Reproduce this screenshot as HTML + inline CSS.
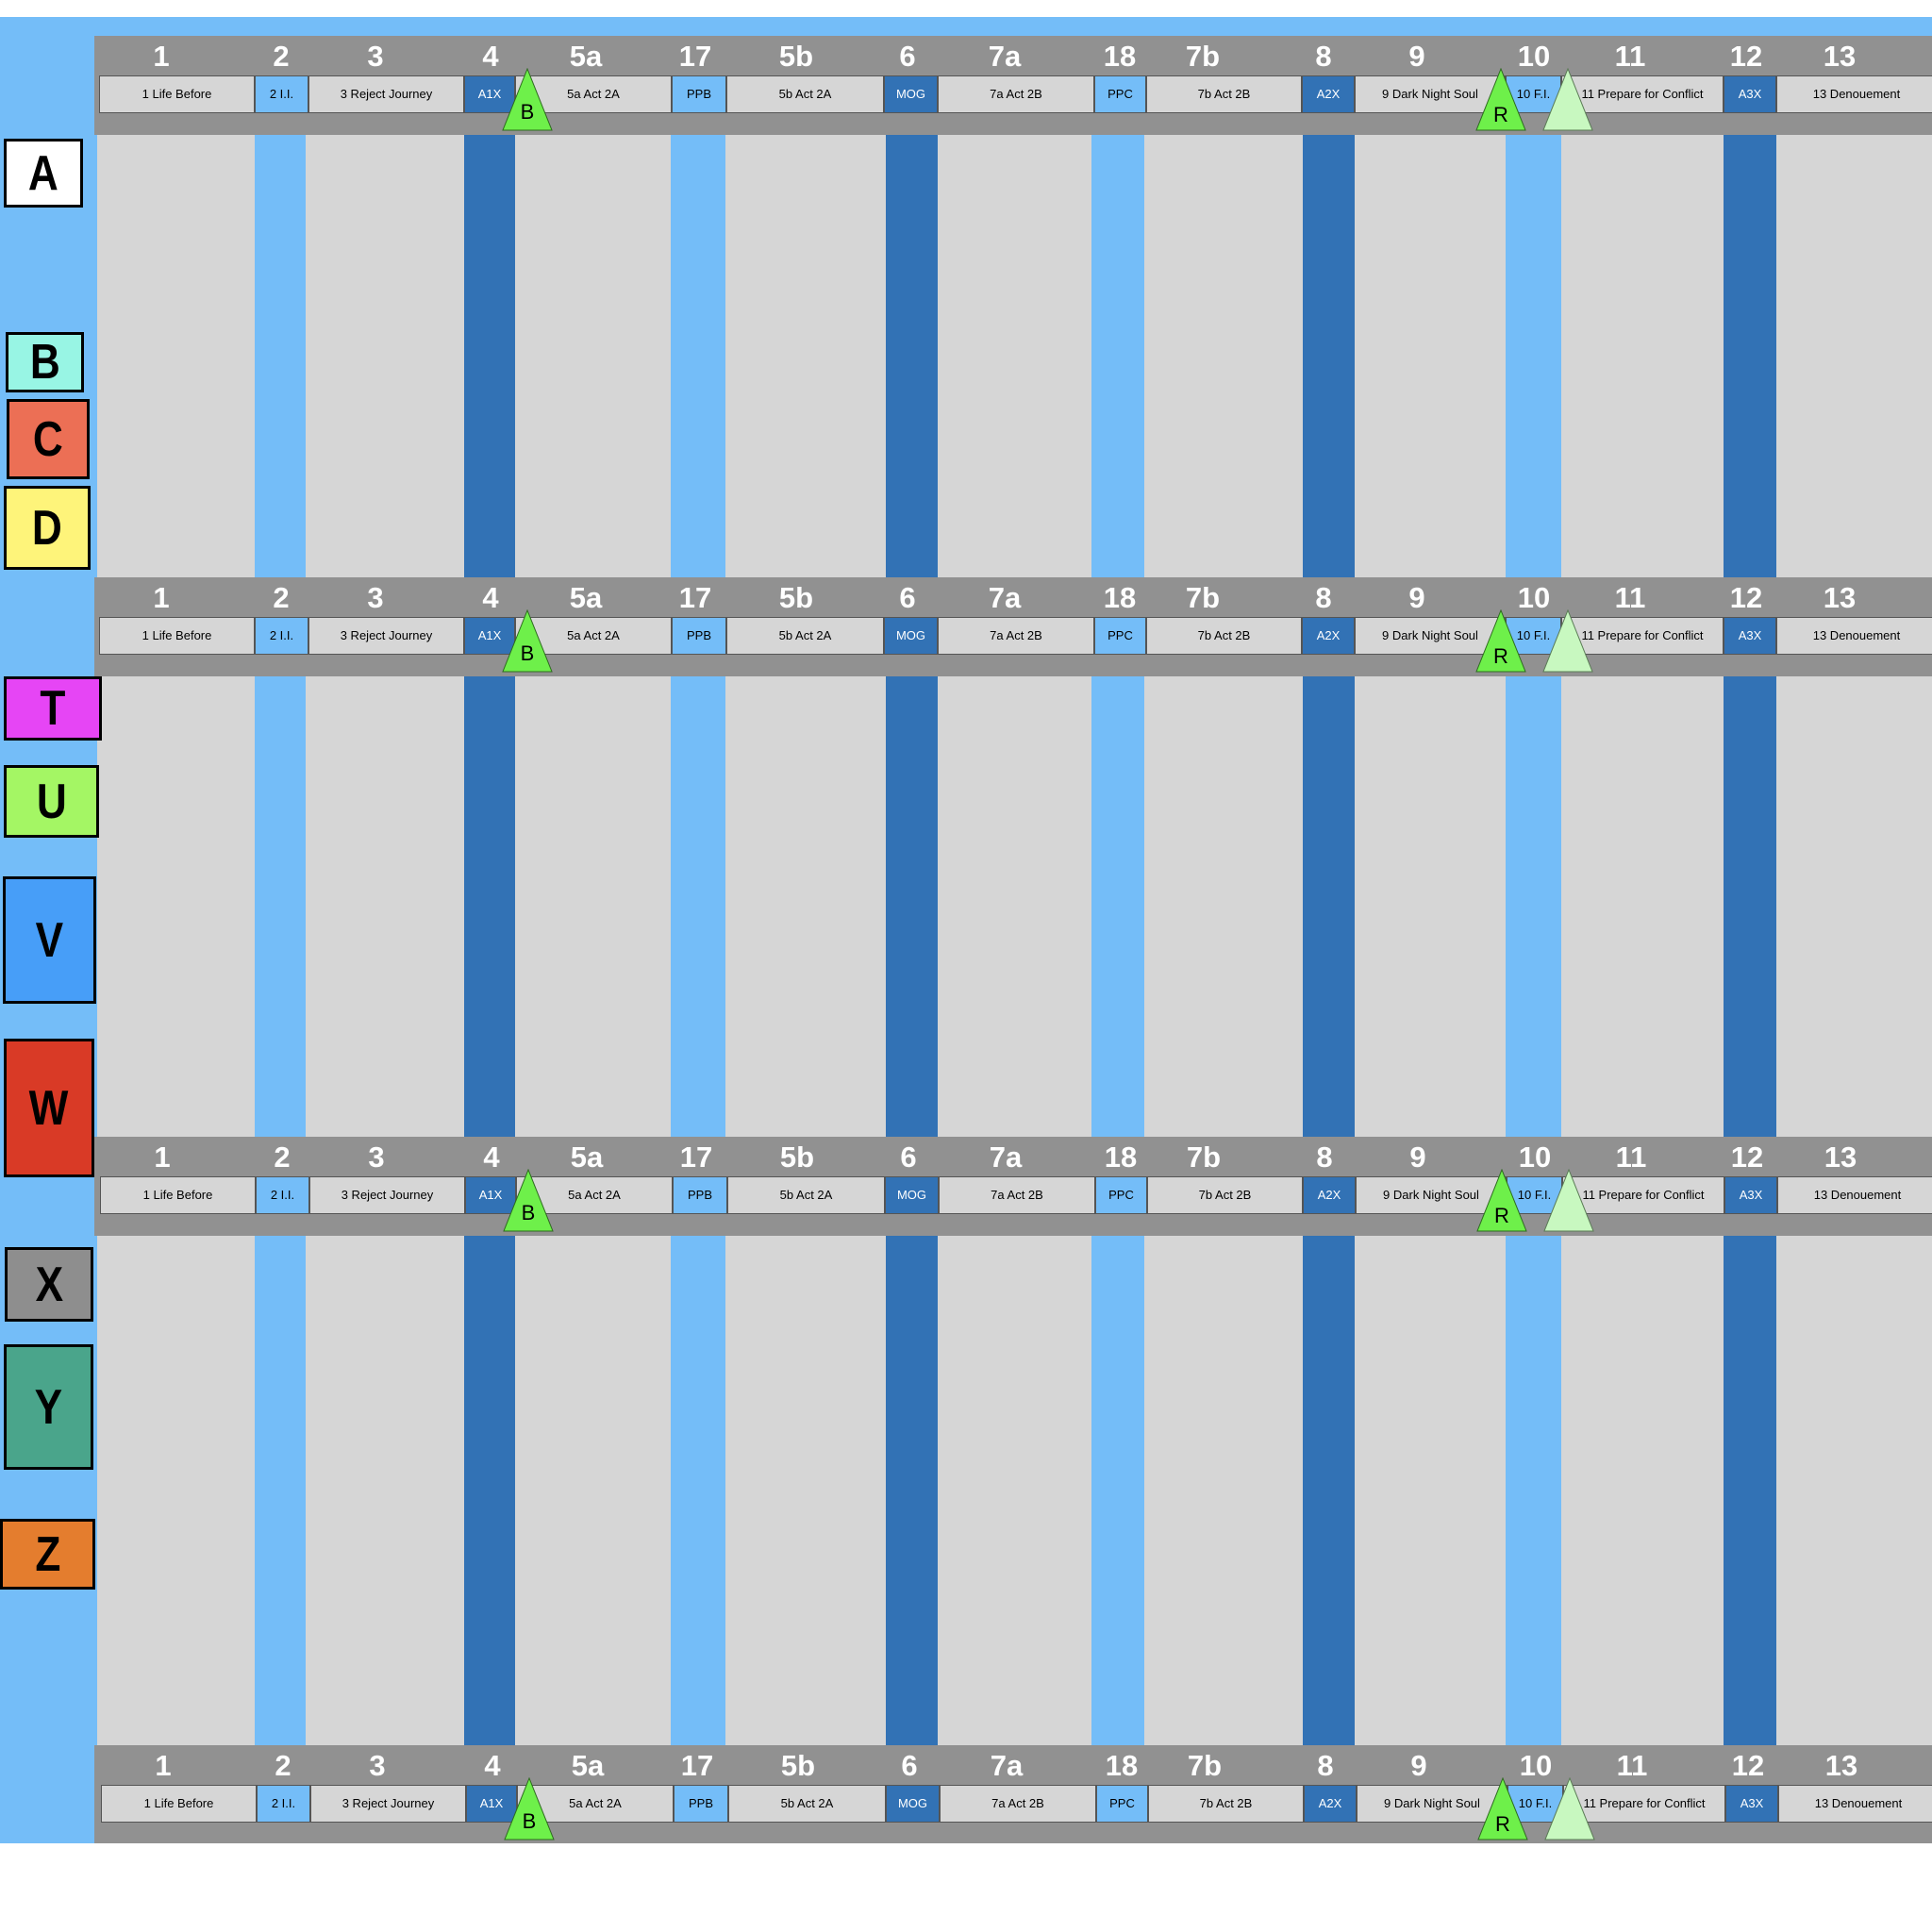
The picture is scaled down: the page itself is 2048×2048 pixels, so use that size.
<!DOCTYPE html>
<html><head><meta charset="utf-8"><style>
*{margin:0;padding:0;box-sizing:border-box}
body{width:2048px;height:2048px;background:#fff;position:relative;overflow:hidden;font-family:"Liberation Sans",sans-serif}
.abs{position:absolute}
#bg{left:0;top:18px;width:2048px;height:1936px;background:#74bdf8}
.c{position:absolute;top:143px;height:1710px}
.l{background:#d6d6d6}.b{background:#74bdf8}.d{background:#3272b5}
.h{position:absolute;left:100px;width:1948px;height:105px;background:#919191}
.n{position:absolute;top:2px;width:80px;margin-left:-40px;text-align:center;color:#fff;font-weight:bold;font-size:31px;line-height:40px}
.lb{position:absolute;top:42px;height:40px;border:1px solid #555;font-size:13px;line-height:38px;text-align:center;color:#000;white-space:nowrap;overflow:hidden}
.lb.d{color:#fff}
.t{position:absolute;top:34px;width:54px;height:67px}
.box{position:absolute;border:3px solid #000;display:flex;align-items:center;justify-content:center;font-weight:bold;font-size:52px;color:#000}
.box span{display:inline-block;transform:scaleX(.85)}
</style></head><body>
<div id="bg" class="abs"></div>
<div class="c l" style="left:103px;width:167px"></div>
<div class="c b" style="left:270px;width:54px"></div>
<div class="c l" style="left:324px;width:168px"></div>
<div class="c d" style="left:492px;width:54px"></div>
<div class="c l" style="left:546px;width:165px"></div>
<div class="c b" style="left:711px;width:58px"></div>
<div class="c l" style="left:769px;width:170px"></div>
<div class="c d" style="left:939px;width:55px"></div>
<div class="c l" style="left:994px;width:163px"></div>
<div class="c b" style="left:1157px;width:56px"></div>
<div class="c l" style="left:1213px;width:168px"></div>
<div class="c d" style="left:1381px;width:55px"></div>
<div class="c l" style="left:1436px;width:160px"></div>
<div class="c b" style="left:1596px;width:59px"></div>
<div class="c l" style="left:1655px;width:172px"></div>
<div class="c d" style="left:1827px;width:56px"></div>
<div class="c l" style="left:1883px;width:165px"></div>

<!-- HEADERS -->
<div class="h" style="top:38px">
<div class="n" style="left:71px">1</div><div class="n" style="left:198px">2</div><div class="n" style="left:298px">3</div><div class="n" style="left:420px">4</div><div class="n" style="left:521px">5a</div><div class="n" style="left:637px">17</div><div class="n" style="left:744px">5b</div><div class="n" style="left:862px">6</div><div class="n" style="left:965px">7a</div><div class="n" style="left:1087px">18</div><div class="n" style="left:1175px">7b</div><div class="n" style="left:1303px">8</div><div class="n" style="left:1402px">9</div><div class="n" style="left:1526px">10</div><div class="n" style="left:1628px">11</div><div class="n" style="left:1751px">12</div><div class="n" style="left:1850px">13</div>
<div class="lb l" style="left:5px;width:165px">1 Life Before</div><div class="lb b" style="left:170px;width:57px">2 I.I.</div><div class="lb l" style="left:227px;width:165px">3 Reject Journey</div><div class="lb d" style="left:392px;width:54px">A1X</div><div class="lb l" style="left:446px;width:166px">5a Act 2A</div><div class="lb b" style="left:612px;width:58px">PPB</div><div class="lb l" style="left:670px;width:167px">5b Act 2A</div><div class="lb d" style="left:837px;width:57px">MOG</div><div class="lb l" style="left:894px;width:166px">7a Act 2B</div><div class="lb b" style="left:1060px;width:55px">PPC</div><div class="lb l" style="left:1115px;width:165px">7b Act 2B</div><div class="lb d" style="left:1280px;width:56px">A2X</div><div class="lb l" style="left:1336px;width:160px">9 Dark Night Soul</div><div class="lb b" style="left:1496px;width:59px">10 F.I.</div><div class="lb l" style="left:1555px;width:172px">11 Prepare for Conflict</div><div class="lb d" style="left:1727px;width:56px">A3X</div><div class="lb l" style="left:1783px;width:170px">13 Denouement</div>
<svg class="t" style="left:432px" viewBox="0 0 54 67"><polygon points="27,1 1,66 53,66" fill="#6ef04a" stroke="#2d6a1e" stroke-width="1"/><text x="27" y="54" font-size="22" text-anchor="middle" font-family="Liberation Sans">B</text></svg>
<svg class="t" style="left:1464px" viewBox="0 0 54 67"><polygon points="27,1 1,66 53,66" fill="#6ef04a" stroke="#2d6a1e" stroke-width="1"/><text x="27" y="57" font-size="22" text-anchor="middle" font-family="Liberation Sans">R</text></svg>
<svg class="t" style="left:1535px" viewBox="0 0 54 67"><polygon points="27,1 1,66 53,66" fill="#c8f8c0" stroke="#5a7a55" stroke-width="1"/></svg>
</div>

<div class="h" style="top:612px">
<div class="n" style="left:71px">1</div><div class="n" style="left:198px">2</div><div class="n" style="left:298px">3</div><div class="n" style="left:420px">4</div><div class="n" style="left:521px">5a</div><div class="n" style="left:637px">17</div><div class="n" style="left:744px">5b</div><div class="n" style="left:862px">6</div><div class="n" style="left:965px">7a</div><div class="n" style="left:1087px">18</div><div class="n" style="left:1175px">7b</div><div class="n" style="left:1303px">8</div><div class="n" style="left:1402px">9</div><div class="n" style="left:1526px">10</div><div class="n" style="left:1628px">11</div><div class="n" style="left:1751px">12</div><div class="n" style="left:1850px">13</div>
<div class="lb l" style="left:5px;width:165px">1 Life Before</div><div class="lb b" style="left:170px;width:57px">2 I.I.</div><div class="lb l" style="left:227px;width:165px">3 Reject Journey</div><div class="lb d" style="left:392px;width:54px">A1X</div><div class="lb l" style="left:446px;width:166px">5a Act 2A</div><div class="lb b" style="left:612px;width:58px">PPB</div><div class="lb l" style="left:670px;width:167px">5b Act 2A</div><div class="lb d" style="left:837px;width:57px">MOG</div><div class="lb l" style="left:894px;width:166px">7a Act 2B</div><div class="lb b" style="left:1060px;width:55px">PPC</div><div class="lb l" style="left:1115px;width:165px">7b Act 2B</div><div class="lb d" style="left:1280px;width:56px">A2X</div><div class="lb l" style="left:1336px;width:160px">9 Dark Night Soul</div><div class="lb b" style="left:1496px;width:59px">10 F.I.</div><div class="lb l" style="left:1555px;width:172px">11 Prepare for Conflict</div><div class="lb d" style="left:1727px;width:56px">A3X</div><div class="lb l" style="left:1783px;width:170px">13 Denouement</div>
<svg class="t" style="left:432px" viewBox="0 0 54 67"><polygon points="27,1 1,66 53,66" fill="#6ef04a" stroke="#2d6a1e" stroke-width="1"/><text x="27" y="54" font-size="22" text-anchor="middle" font-family="Liberation Sans">B</text></svg>
<svg class="t" style="left:1464px" viewBox="0 0 54 67"><polygon points="27,1 1,66 53,66" fill="#6ef04a" stroke="#2d6a1e" stroke-width="1"/><text x="27" y="57" font-size="22" text-anchor="middle" font-family="Liberation Sans">R</text></svg>
<svg class="t" style="left:1535px" viewBox="0 0 54 67"><polygon points="27,1 1,66 53,66" fill="#c8f8c0" stroke="#5a7a55" stroke-width="1"/></svg>
</div>

<div class="h" style="top:1205px">
<div class="n" style="left:72px">1</div><div class="n" style="left:199px">2</div><div class="n" style="left:299px">3</div><div class="n" style="left:421px">4</div><div class="n" style="left:522px">5a</div><div class="n" style="left:638px">17</div><div class="n" style="left:745px">5b</div><div class="n" style="left:863px">6</div><div class="n" style="left:966px">7a</div><div class="n" style="left:1088px">18</div><div class="n" style="left:1176px">7b</div><div class="n" style="left:1304px">8</div><div class="n" style="left:1403px">9</div><div class="n" style="left:1527px">10</div><div class="n" style="left:1629px">11</div><div class="n" style="left:1752px">12</div><div class="n" style="left:1851px">13</div>
<div class="lb l" style="left:6px;width:165px">1 Life Before</div><div class="lb b" style="left:171px;width:57px">2 I.I.</div><div class="lb l" style="left:228px;width:165px">3 Reject Journey</div><div class="lb d" style="left:393px;width:54px">A1X</div><div class="lb l" style="left:447px;width:166px">5a Act 2A</div><div class="lb b" style="left:613px;width:58px">PPB</div><div class="lb l" style="left:671px;width:167px">5b Act 2A</div><div class="lb d" style="left:838px;width:57px">MOG</div><div class="lb l" style="left:895px;width:166px">7a Act 2B</div><div class="lb b" style="left:1061px;width:55px">PPC</div><div class="lb l" style="left:1116px;width:165px">7b Act 2B</div><div class="lb d" style="left:1281px;width:56px">A2X</div><div class="lb l" style="left:1337px;width:160px">9 Dark Night Soul</div><div class="lb b" style="left:1497px;width:59px">10 F.I.</div><div class="lb l" style="left:1556px;width:172px">11 Prepare for Conflict</div><div class="lb d" style="left:1728px;width:56px">A3X</div><div class="lb l" style="left:1784px;width:170px">13 Denouement</div>
<svg class="t" style="left:433px" viewBox="0 0 54 67"><polygon points="27,1 1,66 53,66" fill="#6ef04a" stroke="#2d6a1e" stroke-width="1"/><text x="27" y="54" font-size="22" text-anchor="middle" font-family="Liberation Sans">B</text></svg>
<svg class="t" style="left:1465px" viewBox="0 0 54 67"><polygon points="27,1 1,66 53,66" fill="#6ef04a" stroke="#2d6a1e" stroke-width="1"/><text x="27" y="57" font-size="22" text-anchor="middle" font-family="Liberation Sans">R</text></svg>
<svg class="t" style="left:1536px" viewBox="0 0 54 67"><polygon points="27,1 1,66 53,66" fill="#c8f8c0" stroke="#5a7a55" stroke-width="1"/></svg>
</div>

<div class="h" style="top:1850px;height:104px">
<div class="n" style="left:73px">1</div><div class="n" style="left:200px">2</div><div class="n" style="left:300px">3</div><div class="n" style="left:422px">4</div><div class="n" style="left:523px">5a</div><div class="n" style="left:639px">17</div><div class="n" style="left:746px">5b</div><div class="n" style="left:864px">6</div><div class="n" style="left:967px">7a</div><div class="n" style="left:1089px">18</div><div class="n" style="left:1177px">7b</div><div class="n" style="left:1305px">8</div><div class="n" style="left:1404px">9</div><div class="n" style="left:1528px">10</div><div class="n" style="left:1630px">11</div><div class="n" style="left:1753px">12</div><div class="n" style="left:1852px">13</div>
<div class="lb l" style="left:7px;width:165px">1 Life Before</div><div class="lb b" style="left:172px;width:57px">2 I.I.</div><div class="lb l" style="left:229px;width:165px">3 Reject Journey</div><div class="lb d" style="left:394px;width:54px">A1X</div><div class="lb l" style="left:448px;width:166px">5a Act 2A</div><div class="lb b" style="left:614px;width:58px">PPB</div><div class="lb l" style="left:672px;width:167px">5b Act 2A</div><div class="lb d" style="left:839px;width:57px">MOG</div><div class="lb l" style="left:896px;width:166px">7a Act 2B</div><div class="lb b" style="left:1062px;width:55px">PPC</div><div class="lb l" style="left:1117px;width:165px">7b Act 2B</div><div class="lb d" style="left:1282px;width:56px">A2X</div><div class="lb l" style="left:1338px;width:160px">9 Dark Night Soul</div><div class="lb b" style="left:1498px;width:59px">10 F.I.</div><div class="lb l" style="left:1557px;width:172px">11 Prepare for Conflict</div><div class="lb d" style="left:1729px;width:56px">A3X</div><div class="lb l" style="left:1785px;width:170px">13 Denouement</div>
<svg class="t" style="left:434px" viewBox="0 0 54 67"><polygon points="27,1 1,66 53,66" fill="#6ef04a" stroke="#2d6a1e" stroke-width="1"/><text x="27" y="54" font-size="22" text-anchor="middle" font-family="Liberation Sans">B</text></svg>
<svg class="t" style="left:1466px" viewBox="0 0 54 67"><polygon points="27,1 1,66 53,66" fill="#6ef04a" stroke="#2d6a1e" stroke-width="1"/><text x="27" y="57" font-size="22" text-anchor="middle" font-family="Liberation Sans">R</text></svg>
<svg class="t" style="left:1537px" viewBox="0 0 54 67"><polygon points="27,1 1,66 53,66" fill="#c8f8c0" stroke="#5a7a55" stroke-width="1"/></svg>
</div>

<!-- LETTER BOXES -->
<div class="box" style="left:4px;top:147px;width:84px;height:73px;background:#fff"><span>A</span></div>
<div class="box" style="left:6px;top:352px;width:83px;height:64px;background:#98f5e4"><span>B</span></div>
<div class="box" style="left:7px;top:423px;width:88px;height:85px;background:#ec6f55"><span>C</span></div>
<div class="box" style="left:4px;top:515px;width:92px;height:89px;background:#fef47a"><span>D</span></div>
<div class="box" style="left:4px;top:717px;width:104px;height:68px;background:#e645f5"><span>T</span></div>
<div class="box" style="left:4px;top:811px;width:101px;height:77px;background:#a4f664"><span>U</span></div>
<div class="box" style="left:3px;top:929px;width:99px;height:135px;background:#479ef8"><span>V</span></div>
<div class="box" style="left:4px;top:1101px;width:96px;height:147px;background:#d93a26"><span>W</span></div>
<div class="box" style="left:5px;top:1322px;width:94px;height:79px;background:#8e8e8e"><span>X</span></div>
<div class="box" style="left:4px;top:1425px;width:95px;height:133px;background:#4aa58b"><span>Y</span></div>
<div class="box" style="left:0px;top:1610px;width:101px;height:75px;background:#e47d2e"><span>Z</span></div>
</body></html>
